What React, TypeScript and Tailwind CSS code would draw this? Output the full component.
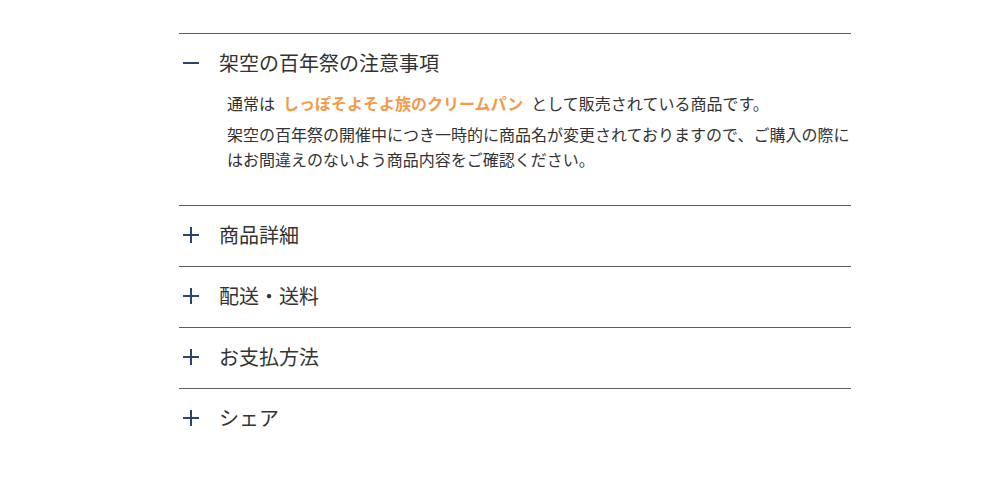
import { useState } from 'react';

const sections = ['架空の百年祭の注意事項', '商品詳細', '配送・送料', 'お支払方法', 'シェア'];

function Icon({ open }: { open: boolean }) {
  return (
    <svg width="16" height="16" viewBox="0 0 16 16" className="shrink-0">
      <line x1="0" y1="8" x2="16" y2="8" stroke="#2b4570" strokeWidth="2" />
      {!open && <line x1="8" y1="0" x2="8" y2="16" stroke="#2b4570" strokeWidth="2" />}
    </svg>
  );
}

export default function App() {
  const [open, setOpen] = useState(0);

  return (
    <div
      className="w-[1000px] h-[480px] bg-white pt-[33px]"
      style={{ fontFamily: '"Noto Sans CJK JP", "Noto Sans", sans-serif' }}
    >
      <div className="ml-[179px] w-[672px]">
        {sections.map((title, i) => (
          <div key={title} className="border-t border-[#5c5c5c]">
            <button
              onClick={() => setOpen(open === i ? -1 : i)}
              className="flex h-[60px] w-full items-center gap-5 pb-[2px] pl-1 text-left"
            >
              <Icon open={open === i} />
              <span className="text-[20px] text-[#333]">{title}</span>
            </button>
            {open === i && i === 0 && (
              <div className="-mt-[3px] pl-12 pb-[33px] text-[16px] leading-[25px] text-[#333]">
                <p className="mb-[6px]">
                  通常は
                  <span className="mx-2 font-bold text-[#f39a4c]">しっぽそよそよ族のクリームパン</span>
                  として販売されている商品です。
                </p>
                <p>
                  架空の百年祭の開催中につき一時的に商品名が変更されておりますので、ご購入の際にはお間違えのないよう商品内容をご確認ください。
                </p>
              </div>
            )}
          </div>
        ))}
      </div>
    </div>
  );
}
